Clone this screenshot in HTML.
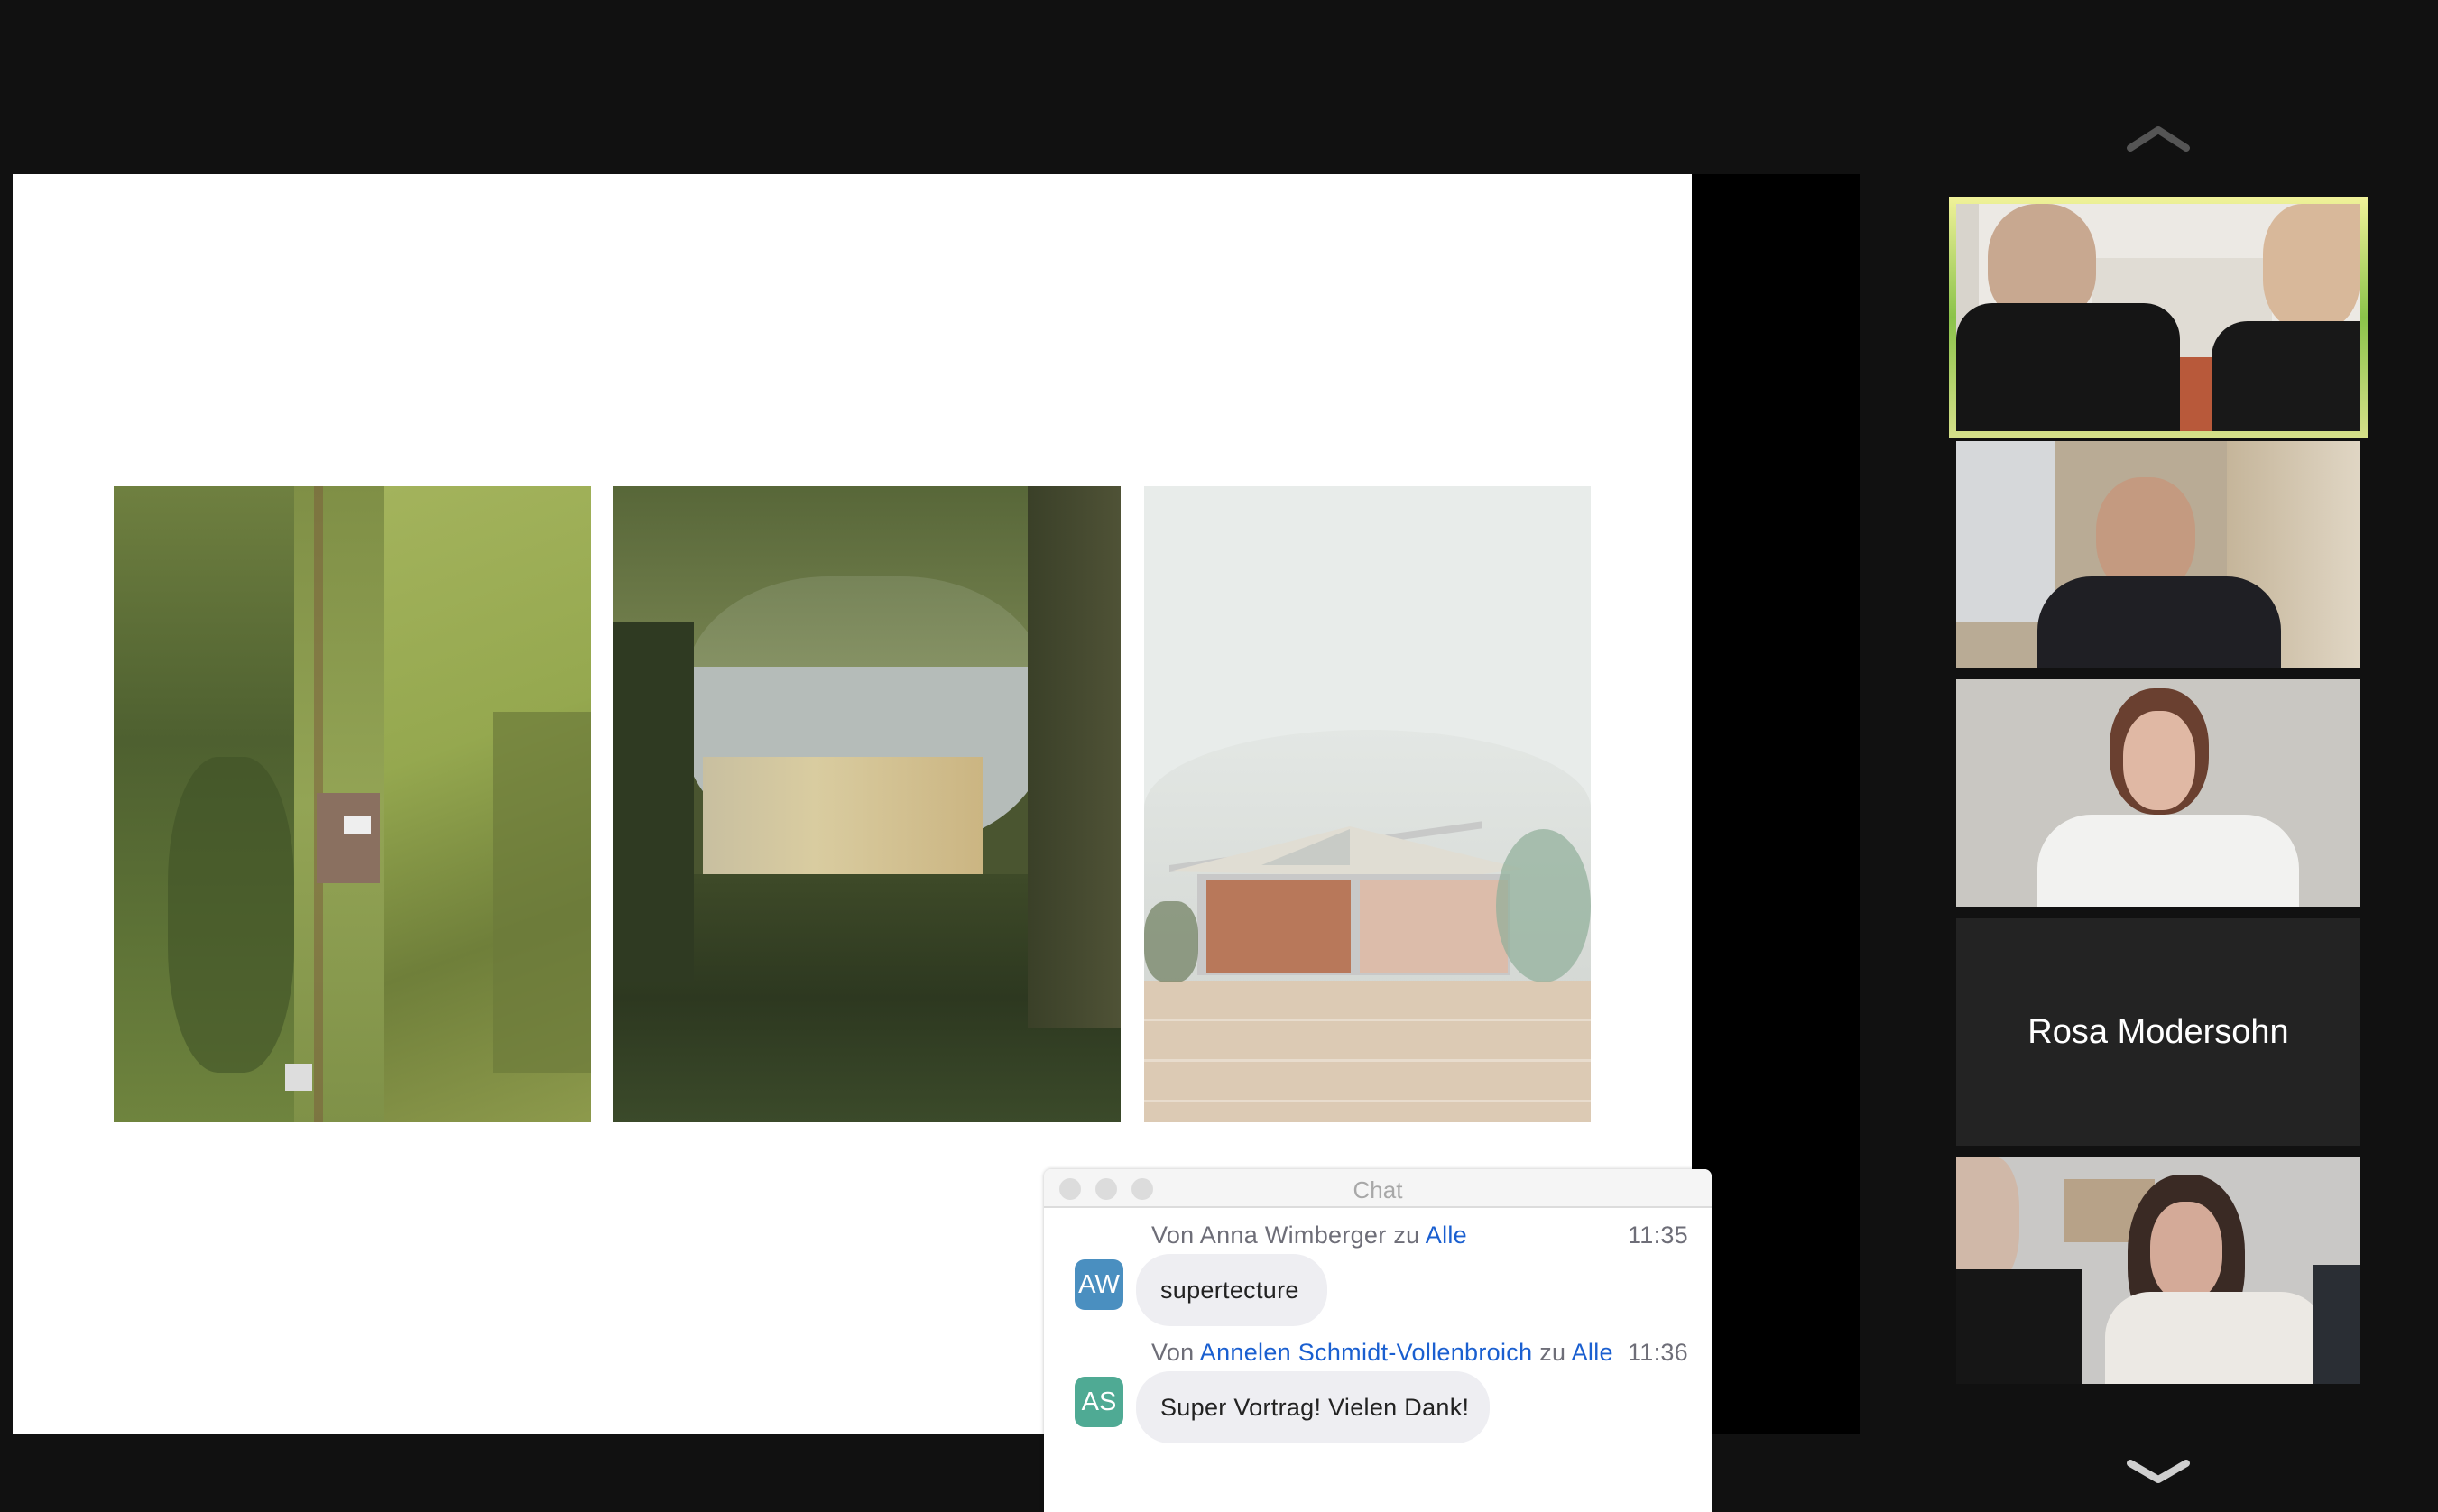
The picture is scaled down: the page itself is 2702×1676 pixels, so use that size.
<!DOCTYPE html>
<html><head><meta charset="utf-8"><style>
*{margin:0;padding:0;box-sizing:border-box}
body{width:2702px;height:1670px;background:#111111;position:relative;overflow:hidden;font-family:"Liberation Sans",sans-serif}
.abs{position:absolute}
.ct{font-size:27px;letter-spacing:0.3px}
</style></head><body>
<div class="abs" style="left:14px;top:193px;width:1861px;height:1396px;background:#fff"></div>
<div class="abs" style="left:1875px;top:193px;width:186px;height:1396px;background:#000"></div>

<div class="abs" style="left:126px;top:539px;width:529px;height:705px;overflow:hidden;background:#8a9a45">
 <div class="abs" style="left:0;top:0;width:200px;height:705px;background:linear-gradient(180deg,#6f8040,#4e6030 40%,#5d7236 70%,#6f843e)"></div>
 <div class="abs" style="left:200px;top:0;width:130px;height:705px;background:linear-gradient(180deg,#7f8f46,#93a455 50%,#7f9148)"></div>
 <div class="abs" style="left:300px;top:0;width:229px;height:705px;background:linear-gradient(160deg,#a3b35c,#95a84f 40%,#6f7f3a 70%,#8d9a4c)"></div>
 <div class="abs" style="left:60px;top:300px;width:140px;height:350px;background:#3f5226;opacity:.6;border-radius:40%"></div>
 <div class="abs" style="left:420px;top:250px;width:110px;height:400px;background:#6c7a3a;opacity:.7"></div>
 <div class="abs" style="left:222px;top:0;width:10px;height:705px;background:#7a5a3a;opacity:.5"></div>
 <div class="abs" style="left:225px;top:340px;width:70px;height:100px;background:#8a7060"></div>
 <div class="abs" style="left:255px;top:365px;width:30px;height:20px;background:#eee"></div>
 <div class="abs" style="left:190px;top:640px;width:30px;height:30px;background:#ddd"></div>
</div>

<div class="abs" style="left:679px;top:539px;width:563px;height:705px;overflow:hidden;background:#4a5530">
 <div class="abs" style="left:80px;top:100px;width:400px;height:300px;background:#cfd6dc;border-radius:40%;opacity:.8"></div>
 <div class="abs" style="left:0;top:0;width:563px;height:200px;background:linear-gradient(180deg,#5a6a3a,#7d8a55);opacity:.85"></div>
 <div class="abs" style="left:100px;top:300px;width:310px;height:200px;background:linear-gradient(90deg,#c8bfa0,#d9cca0 40%,#cbb582)"></div>
 <div class="abs" style="left:0;top:430px;width:563px;height:275px;background:linear-gradient(180deg,#3e4a28,#2d3820 50%,#3b4a2a)"></div>
 <div class="abs" style="left:0;top:150px;width:90px;height:400px;background:#2f3a22"></div>
 <div class="abs" style="left:460px;top:0;width:103px;height:600px;background:linear-gradient(90deg,#3a4028,#4f5236)"></div>
</div>

<div class="abs" style="left:1268px;top:539px;width:495px;height:705px;overflow:hidden;background:#e8ecea">
 <div class="abs" style="left:0;top:270px;width:495px;height:290px;background:linear-gradient(180deg,#e3e7e4,#d4d8d4);border-radius:50% 50% 0 0/30% 30% 0 0"></div>
 <div class="abs" style="left:0;top:548px;width:495px;height:157px;background:repeating-linear-gradient(180deg,#dccab4 0 42px,#e8dccd 42px 45px)"></div>
 <div class="abs" style="left:28px;top:420px;width:346px;height:8px;background:#c8c9c8;transform:skewY(-8deg);transform-origin:left"></div>
 <svg class="abs" style="left:0;top:0" width="495" height="705"><polygon points="28,427 228,377 420,424 346,434" fill="#e0ddd3"/><polygon points="130,420 228,380 228,420" fill="#c8cbc6"/></svg>
 <div class="abs" style="left:59px;top:430px;width:347px;height:112px;background:#c8c8c8"></div>
 <div class="abs" style="left:69px;top:436px;width:160px;height:103px;background:#b8785a"></div>
 <div class="abs" style="left:239px;top:436px;width:164px;height:103px;background:#dcbcaa"></div>
 <div class="abs" style="left:390px;top:380px;width:105px;height:170px;background:#8eae98;border-radius:50%;opacity:.7"></div>
 <div class="abs" style="left:0;top:460px;width:60px;height:90px;background:#6d7e5e;border-radius:40%;opacity:.7"></div>
</div>

<div class="abs" style="left:1157px;top:1296px;width:740px;height:380px;background:#fff;border-radius:8px 8px 0 0;box-shadow:0 0 4px rgba(0,0,0,.25)">
 <div style="height:43px;background:#f5f5f5;border-bottom:2px solid #dcdcdc;border-radius:8px 8px 0 0;position:relative">
  <div class="abs" style="left:17px;top:10px;width:24px;height:24px;border-radius:50%;background:#dcdcdc"></div>
  <div class="abs" style="left:57px;top:10px;width:24px;height:24px;border-radius:50%;background:#dcdcdc"></div>
  <div class="abs" style="left:97px;top:10px;width:24px;height:24px;border-radius:50%;background:#dcdcdc"></div>
  <div class="abs" style="left:0;top:8px;width:740px;text-align:center;font-size:26px;color:#a8a8a8">Chat</div>
 </div>
 <div class="abs ct" style="left:119px;top:58px;color:#6e6e78">Von Anna Wimberger zu <span style="color:#1a5fd0">Alle</span></div>
 <div class="abs ct" style="right:26px;top:58px;color:#6e6e78">11:35</div>
 <div class="abs" style="left:34px;top:100px;width:54px;height:56px;border-radius:11px;background:#4a8fc0;color:#fff;font-size:29px;text-align:center;line-height:56px">AW</div>
 <div class="abs ct" style="left:102px;top:94px;width:212px;height:80px;border-radius:38px;background:#eeeef2;color:#222;line-height:80px;padding-left:27px">supertecture</div>
 <div class="abs ct" style="left:119px;top:188px;color:#6e6e78">Von <span style="color:#1a5fd0">Annelen Schmidt-Vollenbroich</span> zu <span style="color:#1a5fd0">Alle</span></div>
 <div class="abs ct" style="right:26px;top:188px;color:#6e6e78">11:36</div>
 <div class="abs" style="left:34px;top:230px;width:54px;height:56px;border-radius:11px;background:#4faa94;color:#fff;font-size:29px;text-align:center;line-height:56px">AS</div>
 <div class="abs ct" style="left:102px;top:224px;width:392px;height:80px;border-radius:38px;background:#eeeef2;color:#222;line-height:80px;padding-left:27px">Super Vortrag! Vielen Dank!</div>
</div>

<svg class="abs" style="left:2355px;top:136px" width="74" height="34"><polyline points="6,28 37,8 68,28" fill="none" stroke="#555" stroke-width="8" stroke-linecap="round" stroke-linejoin="round"/></svg>
<div class="abs" style="left:2160px;top:218px;width:464px;height:268px;background:linear-gradient(180deg,#f1f29a,#8bc34a 50%,#d6e08a);"></div>
<div class="abs" style="left:2168px;top:226px;width:448px;height:252px;overflow:hidden;background:#ece9e4">
 <div class="abs" style="left:150px;top:60px;width:200px;height:120px;background:#e0dcd4"></div>
 <div class="abs" style="left:235px;top:170px;width:60px;height:82px;background:#b8593a"></div>
 <div class="abs" style="left:0;top:0;width:25px;height:252px;background:#d8d4cc"></div>
 <div class="abs" style="left:35px;top:0;width:120px;height:130px;background:#c8a890;border-radius:45% 45% 40% 40%"></div>
 <div class="abs" style="left:0;top:110px;width:248px;height:142px;background:#151515;border-radius:40px 40px 0 0"></div>
 <div class="abs" style="left:340px;top:0;width:108px;height:140px;background:#d8b89a;border-radius:40% 0 40% 40%"></div>
 <div class="abs" style="left:283px;top:130px;width:165px;height:122px;background:#181818;border-radius:40px 0 0 0"></div>
</div>
<div class="abs" style="left:2168px;top:489px;width:448px;height:252px;overflow:hidden;background:#b9ab95">
 <div class="abs" style="left:0;top:0;width:110px;height:200px;background:#d6d8da"></div>
 <div class="abs" style="left:300px;top:0;width:148px;height:252px;background:linear-gradient(90deg,#c5b59a,#e0d6c4)"></div>
 <div class="abs" style="left:155px;top:40px;width:110px;height:130px;background:#c49a80;border-radius:45%"></div>
 <div class="abs" style="left:90px;top:150px;width:270px;height:102px;background:#1f1f24;border-radius:60px 60px 0 0"></div>
</div>
<div class="abs" style="left:2168px;top:753px;width:448px;height:252px;overflow:hidden;background:#c9c7c2">
 <div class="abs" style="left:170px;top:10px;width:110px;height:140px;background:#6a4030;border-radius:45%"></div>
 <div class="abs" style="left:185px;top:35px;width:80px;height:110px;background:#e0b8a4;border-radius:45%"></div>
 <div class="abs" style="left:90px;top:150px;width:290px;height:102px;background:#f2f2f0;border-radius:60px 60px 0 0"></div>
</div>
<div class="abs" style="left:2168px;top:1018px;width:448px;height:252px;background:#232323;color:#fff;font-size:38px;text-align:center;line-height:252px">Rosa Modersohn</div>
<div class="abs" style="left:2168px;top:1282px;width:448px;height:252px;overflow:hidden;background:#c9c8c6">
 <div class="abs" style="left:120px;top:25px;width:100px;height:70px;background:#b7a288"></div>
 <div class="abs" style="left:0;top:0;width:70px;height:140px;background:#d0b8a8;border-radius:0 40% 40% 0"></div>
 <div class="abs" style="left:0;top:125px;width:140px;height:127px;background:#161616"></div>
 <div class="abs" style="left:190px;top:20px;width:130px;height:190px;background:#3a2a24;border-radius:45%"></div>
 <div class="abs" style="left:215px;top:50px;width:80px;height:110px;background:#d4aa98;border-radius:45%"></div>
 <div class="abs" style="left:165px;top:150px;width:245px;height:102px;background:#ece9e4;border-radius:50px 50px 0 0"></div>
 <div class="abs" style="left:395px;top:120px;width:53px;height:132px;background:#2a2e34"></div>
</div>
<svg class="abs" style="left:2355px;top:1614px" width="74" height="34"><polyline points="6,8 37,26 68,8" fill="none" stroke="#cfcfcf" stroke-width="8" stroke-linecap="round" stroke-linejoin="round"/></svg>
</body></html>
